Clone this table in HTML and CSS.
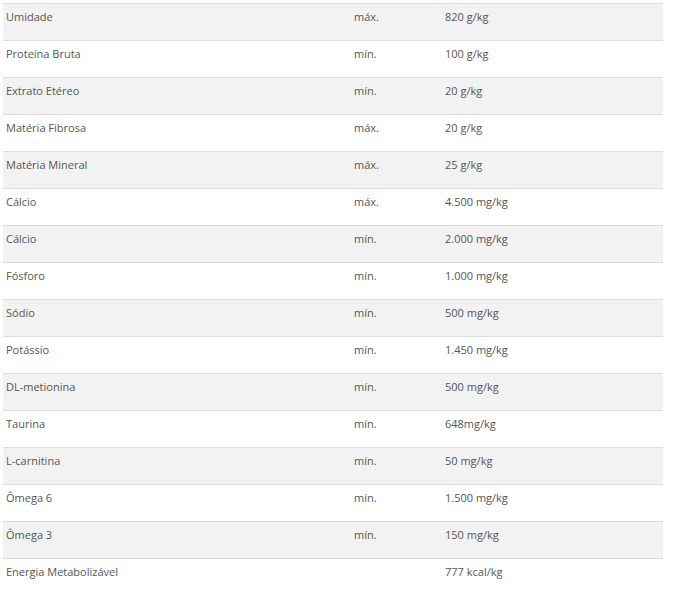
FILE: index.html
```html
<!DOCTYPE html>
<html lang="pt">
<head>
<meta charset="utf-8">
<link rel="stylesheet" href="styles.css">
</head>
<body>
<table class="nutri">
<tbody>
<tr class="alt"><td class="c1">Umidade</td><td class="c2">máx.</td><td class="c3">820 g/kg</td></tr>
<tr><td class="c1">Proteína Bruta</td><td class="c2">mín.</td><td class="c3">100 g/kg</td></tr>
<tr class="alt"><td class="c1">Extrato Etéreo</td><td class="c2">mín.</td><td class="c3">20 g/kg</td></tr>
<tr><td class="c1">Matéria Fibrosa</td><td class="c2">máx.</td><td class="c3">20 g/kg</td></tr>
<tr class="alt"><td class="c1">Matéria Mineral</td><td class="c2">máx.</td><td class="c3">25 g/kg</td></tr>
<tr><td class="c1">Cálcio</td><td class="c2">máx.</td><td class="c3">4.500 mg/kg</td></tr>
<tr class="alt"><td class="c1">Cálcio</td><td class="c2">mín.</td><td class="c3">2.000 mg/kg</td></tr>
<tr><td class="c1">Fósforo</td><td class="c2">mín.</td><td class="c3">1.000 mg/kg</td></tr>
<tr class="alt"><td class="c1">Sódio</td><td class="c2">mín.</td><td class="c3">500 mg/kg</td></tr>
<tr><td class="c1">Potássio</td><td class="c2">mín.</td><td class="c3">1.450 mg/kg</td></tr>
<tr class="alt"><td class="c1">DL-metionina</td><td class="c2">mín.</td><td class="c3">500 mg/kg</td></tr>
<tr><td class="c1">Taurina</td><td class="c2">mín.</td><td class="c3">648mg/kg</td></tr>
<tr class="alt"><td class="c1">L-carnitina</td><td class="c2">mín.</td><td class="c3">50 mg/kg</td></tr>
<tr><td class="c1">Ômega 6</td><td class="c2">mín.</td><td class="c3">1.500 mg/kg</td></tr>
<tr class="alt"><td class="c1">Ômega 3</td><td class="c2">mín.</td><td class="c3">150 mg/kg</td></tr>
<tr><td class="c1">Energia Metabolizável</td><td class="c2"></td><td class="c3">777 kcal/kg</td></tr>
</tbody>
</table>
</body>
</html>
```
FILE: styles.css
```css
html, body {
  margin: 0;
  padding: 0;
  background: #ffffff;
}
body {
  padding: 3px 0 0 3px;
  font-family: "Open Sans", "DejaVu Sans", sans-serif;
  font-size: 11px;
  color: #555555;
}
.nutri {
  width: 660px;
  border-collapse: collapse;
  table-layout: fixed;
}
.nutri tr {
  height: 37px;
  border-top: 1px solid #dcdcdc;
}
.nutri tr.alt {
  background: #f2f2f2;
}
.nutri td {
  vertical-align: top;
  padding: 5px 3px 0 3px;
  line-height: 15px;
  box-sizing: border-box;
}
.c1 { width: 348px; }
.c2 { width: 91px; }
.c3 { width: 221px; }
```
